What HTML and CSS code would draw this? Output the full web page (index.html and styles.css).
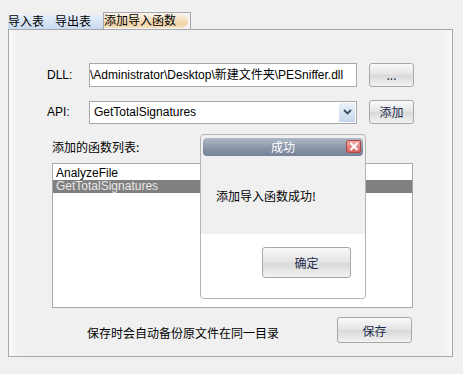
FILE: index.html
```html
<!DOCTYPE html>
<html>
<head>
	<meta charset="utf-8">
	<title>添加导入函数</title>
	<link rel="stylesheet" href="styles.css">
</head>
<body>
	<div class="tabs">
		<div class="strip">
			<span class="tab">导入表</span>
			<span class="tab">导出表</span>
		</div>
		<span class="tab active"><span class="pill">添加导入函数</span></span>
	</div>
	<div class="panel">
		<div class="row first">
			<span class="label">DLL:</span>
			<div class="field">\Administrator\Desktop\新建文件夹\PESniffer.dll</div>
			<button class="btn small">...</button>
		</div>
		<div class="row second">
			<span class="label">API:</span>
			<div class="field combo">
				<span class="value">GetTotalSignatures</span>
				<span class="arrow">
					<svg width="9" height="6" viewBox="0 0 9 6"><path d="M1 1 L4.5 4.5 L8 1" fill="none" stroke="#3b4a60" stroke-width="1.8"/></svg>
				</span>
			</div>
			<button class="btn small">添加</button>
		</div>
		<div class="list-title">添加的函数列表:</div>
		<ul class="list">
			<li>AnalyzeFile</li>
			<li class="selected">GetTotalSignatures</li>
		</ul>
		<div class="footer">
			<span class="note">保存时会自动备份原文件在同一目录</span>
			<button class="btn save">保存</button>
		</div>
	</div>

	<div class="dialog">
		<div class="titlebar">
			<span class="title">成功</span>
			<span class="close">
				<svg width="10" height="9" viewBox="0 0 10 9"><path d="M1.5 1 L8.5 8 M8.5 1 L1.5 8" stroke="#fff" stroke-width="2"/></svg>
			</span>
		</div>
		<div class="message">添加导入函数成功!</div>
		<div class="actions">
			<button class="btn ok">确定</button>
		</div>
	</div>
</body>
</html>
```

FILE: styles.css
```css
body{
	margin: 0;
	background-color: #f0f0f0;
	font-family: "Liberation Sans", "Noto Sans CJK SC", sans-serif;
	font-size: 12px;
	color: #000;
	position: relative;
	height: 374px;
	overflow: hidden;
}
.tabs{
	display: flex;
	align-items: flex-end;
	margin: 12px 0 0 8px;
	height: 17px;
}
.strip{
	display: flex;
	height: 14px;
	width: 95px;
	background: linear-gradient(#e4eefa, #c9daf0);
}
.tab{
	line-height: 14px;
	white-space: nowrap;
}
.strip .tab:first-child{
	width: 47px;
}
.tab.active{
	height: 16px;
	width: 86px;
	border: 1px solid #a8a8a8;
	border-bottom: none;
	background: #f4f4f4;
}
.pill{
	display: block;
	margin-top: 1px;
	height: 14px;
	line-height: 14px;
	width: 84px;
	border-radius: 0 8px 8px 0;
	background: linear-gradient(#fbf3e6, #f0d2a4 70%, #f5e2c4);
}
.panel{
	margin-left: 8px;
	width: 443px;
	height: 326px;
	border: 1px solid #a8a8a8;
	background: linear-gradient(90deg, #fafafa, #f0f0f0 10px, #f0f0f0 430px, #f8f8f8);
}
.row{
	display: flex;
	align-items: center;
	height: 24px;
}
.row.first{
	margin-top: 33px;
}
.row.second{
	margin-top: 13px;
}
.label{
	margin-left: 38px;
	width: 42px;
}
.field{
	box-sizing: border-box;
	width: 268px;
	height: 24px;
	border: 1px solid #a8a8a8;
	background: #fff;
	line-height: 22px;
	padding-left: 4px;
	white-space: nowrap;
	overflow: hidden;
	text-indent: -4px;
}
.combo{
	display: flex;
	justify-content: space-between;
	text-indent: 0;
	padding-right: 1px;
	height: 23px;
	line-height: 21px;
}
.arrow{
	width: 16px;
	margin: 1px 0;
	display: flex;
	align-items: center;
	justify-content: center;
	background: linear-gradient(#eaf2fb, #c4d6ec);
}
.btn{
	font-family: "Noto Sans CJK SC", sans-serif;
	font-size: 12px;
	color: #1e2d4e;
	border: 1px solid #a8a8a8;
	border-radius: 3px;
	background: linear-gradient(#fafafa, #e2e2e2 50%, #d8d8d8 51%, #f2f2f2);
	padding: 0;
	cursor: pointer;
}
.small{
	margin-left: 12px;
	width: 45px;
	height: 24px;
	line-height: 20px;
}
.list-title{
	margin: 14px 0 0 43px;
	font-family: "Noto Sans CJK SC", sans-serif;
	line-height: 17px;
	height: 17px;
}
.list{
	list-style: none;
	margin: 8px 0 0 43px;
	padding: 3px 0 0 0;
	box-sizing: border-box;
	width: 361px;
	height: 145px;
	border: 1px solid #a8a8a8;
	background: #fff;
}
.list li{
	height: 13px;
	line-height: 13px;
	padding-left: 3px;
}
.list li.selected{
	background: #808080;
	color: #e8e8e8;
}
.footer{
	display: flex;
	align-items: center;
	margin-top: 9px;
	height: 26px;
}
.note{
	font-family: "Noto Sans CJK SC", sans-serif;
	margin: 4px 0 0 78px;
	width: 250px;
}
.save{
	width: 75px;
	height: 26px;
}
.dialog{
	position: absolute;
	left: 200px;
	top: 134px;
	width: 164px;
	height: 163px;
	border: 1px solid #b4b4b4;
	border-radius: 4px;
	background: #f0f0f0;
	display: flex;
	flex-direction: column;
	font-family: "Noto Sans CJK SC", sans-serif;
}
.titlebar{
	margin: 3px 2px 0 2px;
	height: 18px;
	border-radius: 4px;
	background: linear-gradient(#aeb8c6, #8793a6 60%, #76839a);
	display: flex;
	align-items: center;
	position: relative;
}
.title{
	flex: 1;
	text-align: center;
	color: #fff;
	font-size: 12px;
	line-height: 18px;
}
.close{
	position: absolute;
	right: 2px;
	top: 2px;
	width: 15px;
	height: 13px;
	box-sizing: border-box;
	border: 1px solid #b04848;
	border-radius: 2px;
	background: linear-gradient(#f2a8a8, #d86464);
	display: flex;
	align-items: center;
	justify-content: center;
}
.message{
	height: 78px;
	padding-left: 15px;
	line-height: 80px;
	font-size: 12px;
}
.actions{
	flex: 1;
	background: #fff;
	border-radius: 0 0 4px 4px;
	display: flex;
	justify-content: flex-end;
	padding: 13px 14px 0 0;
}
.ok{
	width: 89px;
	height: 31px;
}
```
